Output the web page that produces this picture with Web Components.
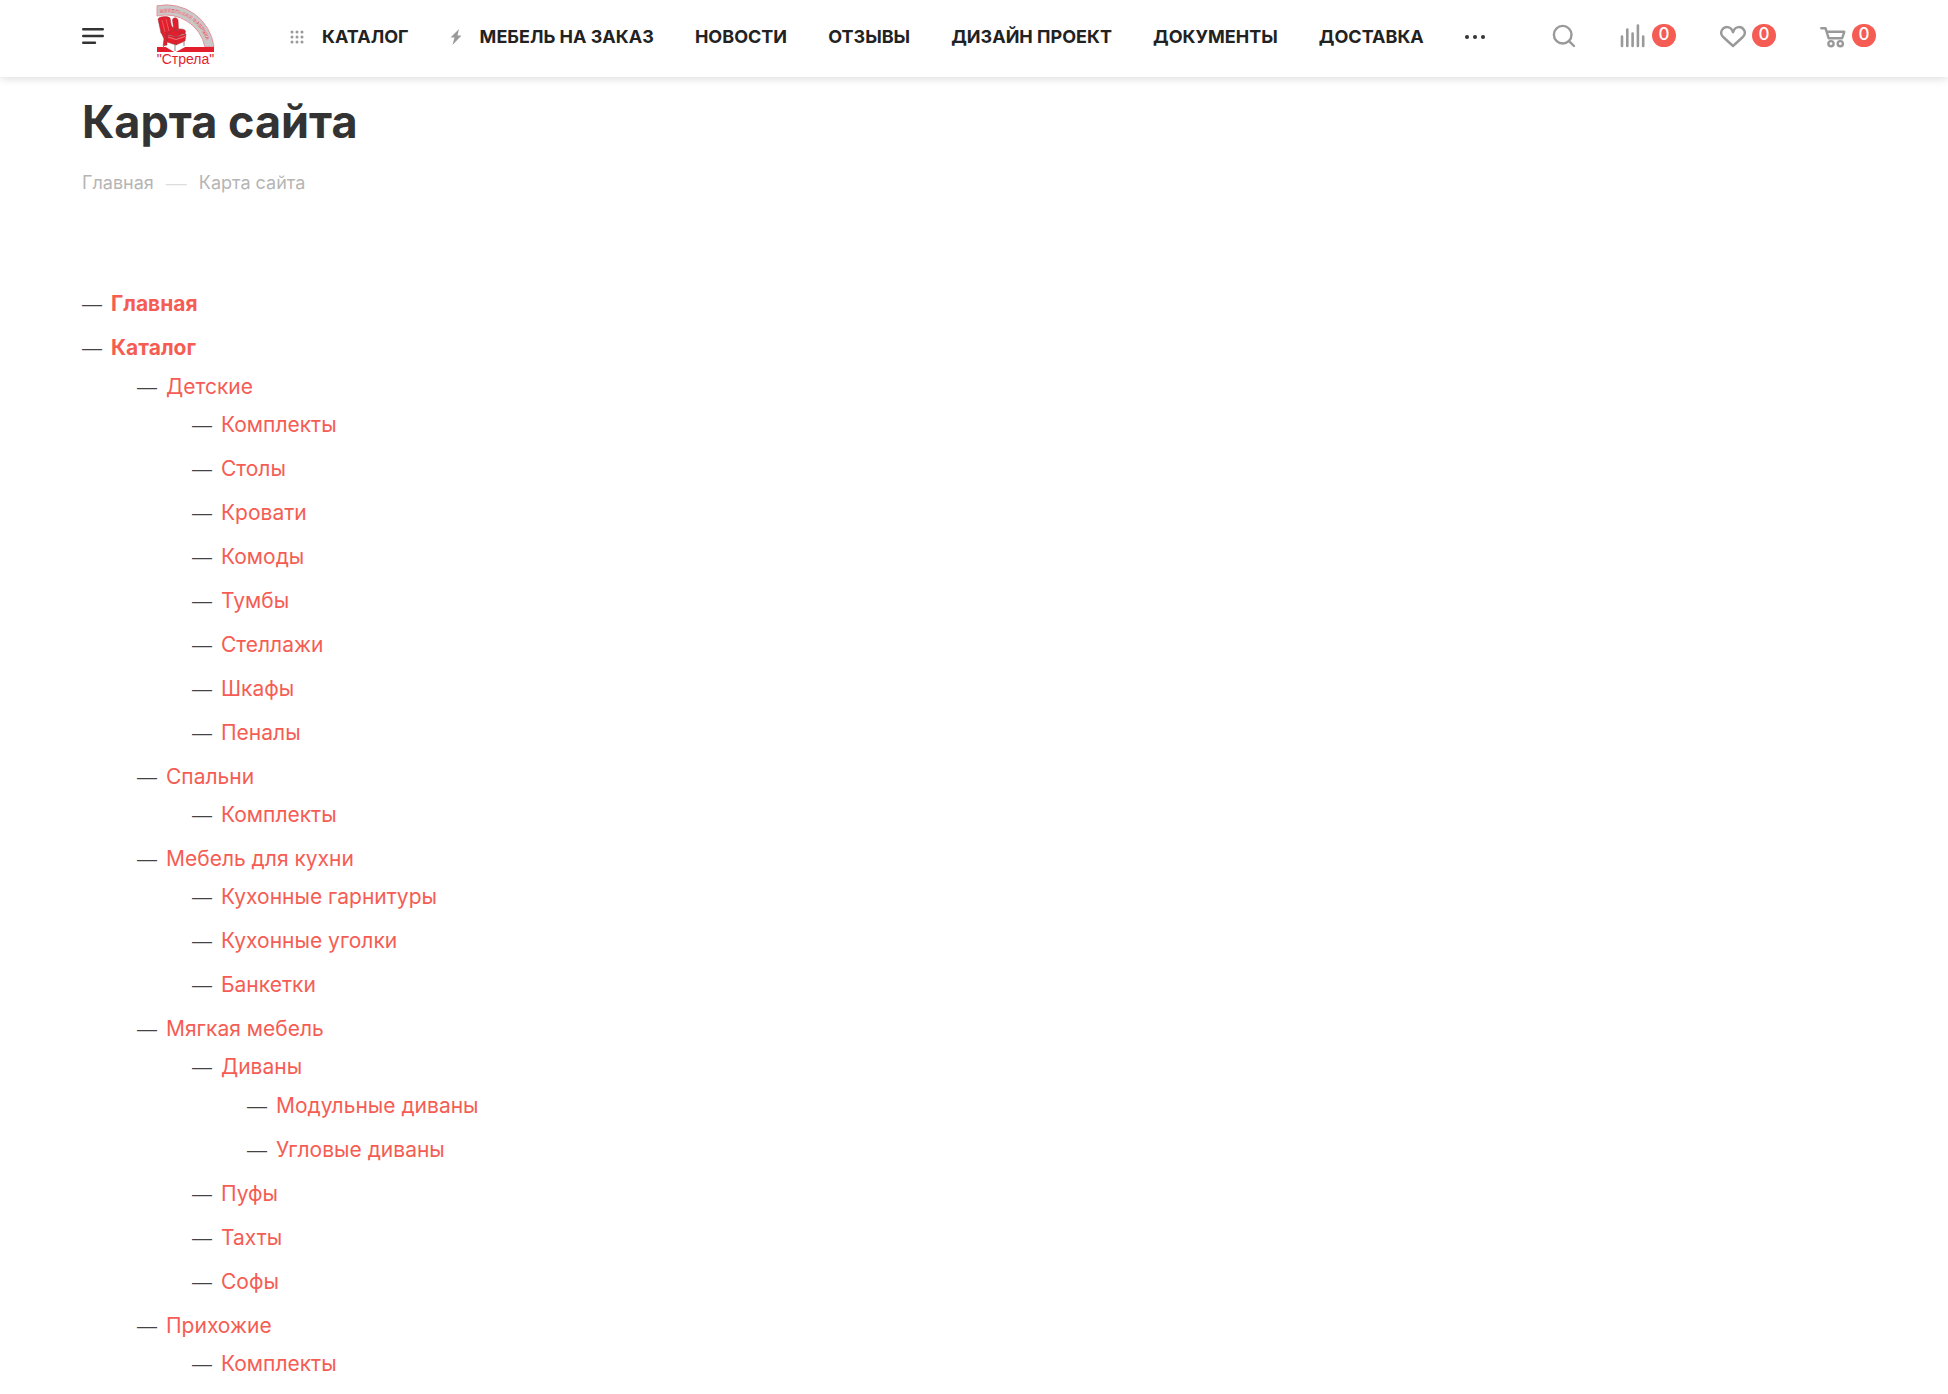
<!DOCTYPE html>
<html lang="ru">
<head>
<meta charset="utf-8">
<meta name="viewport" content="width=device-width, initial-scale=1">
<title>Карта сайта</title>
<style>
  body {
    margin: 0;
    background: #fff;
    color: #333;
    font-family: Inter, "Noto Sans", sans-serif;
    --accent: #f55d54;
    --side: 82px;
  }
</style>
</head>
<body>
<site-header>
  <nav-item href="#catalog" icon="grid">Каталог</nav-item>
  <nav-item href="#custom" icon="bolt">Мебель на заказ</nav-item>
  <nav-item href="#news">Новости</nav-item>
  <nav-item href="#reviews">Отзывы</nav-item>
  <nav-item href="#design">Дизайн проект</nav-item>
  <nav-item href="#docs">Документы</nav-item>
  <nav-item href="#delivery">Доставка</nav-item>
  <count-link slot="tools" href="#compare" icon="compare" label="Сравнение">0</count-link>
  <count-link slot="tools" href="#favorites" icon="heart" label="Избранное">0</count-link>
  <count-link slot="tools" href="#basket" icon="cart" label="Корзина">0</count-link>
</site-header>
<main>
  <page-title>
    Карта сайта
    <a slot="crumb" href="#home">Главная</a>
    <span slot="current">Карта сайта</span>
  </page-title>
  <site-map></site-map>
</main>

<script>
const ICONS = {
  grid: `<svg width="14" height="14" viewBox="0 0 14 14" fill="#999">
    <circle cx="2" cy="2" r="1.5"/><circle cx="7" cy="2" r="1.5"/><circle cx="12" cy="2" r="1.5"/>
    <circle cx="2" cy="7" r="1.5"/><circle cx="7" cy="7" r="1.5"/><circle cx="12" cy="7" r="1.5"/>
    <circle cx="2" cy="12" r="1.5"/><circle cx="7" cy="12" r="1.5"/><circle cx="12" cy="12" r="1.5"/></svg>`,
  bolt: `<svg width="12" height="16" viewBox="0 0 12 16" fill="#999">
    <path d="M9 0 .5 8.500H4.500L2.500 16 11.500 6.500H7.500Z"/></svg>`,
  compare: `<svg width="26" height="24" viewBox="0 0 26 24" stroke="#999" stroke-width="2.600" stroke-linecap="round">
    <path d="M2 12.500V22M7.300 5.500V22M12.600 9.500V22M17.900 1.500V22M23.200 12.500V22"/></svg>`,
  heart: `<svg width="26" height="24" viewBox="0 0 26 24" fill="none" stroke="#999" stroke-width="2.400" stroke-linejoin="round">
    <path d="M13 22 3.200 13C1.200 11 .8 8 2 6 4.500 2 10 2.200 12 6L13 8.300 14 6C16 2.200 21.500 2 24 6 25.200 8 24.800 11 22.800 13Z"/></svg>`,
  cart: `<svg width="26" height="24" viewBox="0 0 26 24" fill="none" stroke="#999" stroke-width="2.400" stroke-linecap="round" stroke-linejoin="round">
    <path d="M1.300 4.200H5.500L8.600 14.200H22.200L24.300 7.800H6.800"/><circle cx="11" cy="19.700" r="2.600"/><circle cx="20.300" cy="19.700" r="2.600"/></svg>`
};

class NavItem extends HTMLElement {
  constructor() {
    super();
    const shadowRoot = this.attachShadow({ mode: "open" });
    shadowRoot.innerHTML = `
      <style>
        :host { display: block; }
        a {
          display: flex;
          align-items: center;
          color: #222;
          font-size: 18px;
          line-height: 24px;
          font-weight: 700;
          text-transform: uppercase;
          text-decoration: none;
          white-space: nowrap;
        }
        svg { display: block; margin-right: 18px; }
      </style>
      <a href="${this.getAttribute("href")}">${ICONS[this.getAttribute("icon")] || ""}<slot></slot></a>
    `;
  }
}

class CountLink extends HTMLElement {
  constructor() {
    super();
    const shadowRoot = this.attachShadow({ mode: "open" });
    shadowRoot.innerHTML = `
      <style>
        :host { display: block; }
        a {
          display: flex;
          align-items: center;
          gap: 6px;
          text-decoration: none;
        }
        svg { display: block; }
        span {
          width: 24px;
          height: 23px;
          border-radius: 12px;
          background: var(--accent);
          color: #fff;
          font-size: 17px;
          line-height: 20px;
          font-weight: 500;
          text-align: center;
        }
      </style>
      <a href="${this.getAttribute("href")}" aria-label="${this.getAttribute("label")}">
        ${ICONS[this.getAttribute("icon")]}<span><slot></slot></span>
      </a>
    `;
  }
}

class SiteLogo extends HTMLElement {
  constructor() {
    super();
    const shadowRoot = this.attachShadow({ mode: "open" });
    shadowRoot.innerHTML = `
      <style>
        :host { display: block; }
        a, svg { display: block; }
        svg { overflow: visible; }
      </style>
      <a href="#home" aria-label="Стрела">
        <svg width="58" height="62" viewBox="0 0 58 62">
          <path d="M0 .8A48 48 0 0 1 57 42H48A40 40 0 0 0 0 11Z" fill="#c9c9c9" stroke="#e88088" stroke-width=".8"/>
          <path id="arc" d="M3 8A41 41 0 0 1 51 42" fill="none"/>
          <text font-family="Liberation Sans" font-size="5" font-weight="700" fill="#f6e4e5" stroke="#dd5a65" stroke-width=".3"><textPath href="#arc">МЕБЕЛЬНАЯ ФАБРИКА</textPath></text>
          <path d="M0 42H57V47H0Z" fill="#e31e2d"/>
          <path d="M7 41 18 47.500 30 41 18 36Z" fill="#fff"/>
          <g fill="#e31e2d" stroke="#8d3a40" stroke-width=".5" stroke-linejoin="round">
            <path d="M1 14C3 11 11 11 13 13L15.500 27 9 31 4 28Z"/>
            <path d="M15.500 15C16 12 20 12 21 15L21.500 24 17 26Z"/>
            <path d="M13 20 18 24 19 28 12 30Z"/>
            <path d="M4 27C6 24 10 26 10 30L10 40 6 41 7 34Z"/>
            <path d="M10 29 17 25 28 28 19 32Z"/>
            <path d="M10 30 19 32 19 40 10 37Z"/>
            <path d="M19 32 29 29 28 36 19 40Z"/>
            <path d="M19 25C22 23 28 24 28.500 26L28 29 21 28Z"/>
          </g>
          <path d="M6.500 40V42.500M18 39V46M27 37V41" stroke="#888" stroke-width="1"/>
          <path d="M11 32 19 34.500 28 31.500" fill="none" stroke="#f9b9bc" stroke-width=".6"/>
          <path d="M5 15 8 27M9 14 12 26" stroke="#f47b80" stroke-width=".6"/>
          <text x="28.500" y="59" text-anchor="middle" font-family="Liberation Sans" font-size="14" fill="#e31e2d">"Стрела"</text>
        </svg>
      </a>
    `;
  }
}

class SiteHeader extends HTMLElement {
  constructor() {
    super();
    const shadowRoot = this.attachShadow({ mode: "open" });
    shadowRoot.innerHTML = `
      <style>
        :host { display: block; }
        header {
          display: flex;
          align-items: center;
          box-sizing: border-box;
          height: 77px;
          padding: 0 72px 6px var(--side);
          background: #fff;
          box-shadow: 0 2px 8px rgba(0, 0, 0, .13);
        }
        button {
          display: block;
          padding: 0;
          border: 0;
          background: none;
        }
        svg { display: block; }
        site-logo { margin: 0 75px 0 53px; }
        nav {
          flex: 1;
          display: flex;
          align-items: center;
          justify-content: space-between;
          padding-top: 2px;
        }
        .tools {
          display: flex;
          align-items: center;
          gap: 44px;
          margin-left: 67px;
        }
      </style>
      <header>
        <button aria-label="Меню">
          <svg width="22" height="16" viewBox="0 0 22 16" stroke="#333" stroke-width="2.400" stroke-linecap="round">
            <path d="M1.200 1.200H20.800M1.200 8H20.800M1.200 14.800H13"/>
          </svg>
        </button>
        <site-logo></site-logo>
        <nav>
          <slot></slot>
          <button aria-label="Ещё">
            <svg width="20" height="4" viewBox="0 0 20 4" fill="#333"><circle cx="2" cy="2" r="2"/><circle cx="10" cy="2" r="2"/><circle cx="18" cy="2" r="2"/></svg>
          </button>
        </nav>
        <div class="tools">
          <button aria-label="Поиск">
            <svg width="24" height="24" viewBox="0 0 24 24" fill="none" stroke="#999" stroke-width="2.400" stroke-linecap="round">
              <circle cx="10.700" cy="10.700" r="8.800"/><path d="M17.300 17.300 22 22"/>
            </svg>
          </button>
          <slot name="tools"></slot>
        </div>
      </header>
    `;
  }
}

class PageTitle extends HTMLElement {
  constructor() {
    super();
    const shadowRoot = this.attachShadow({ mode: "open" });
    shadowRoot.innerHTML = `
      <style>
        :host { display: block; padding: 18px var(--side) 0; }
        h1 {
          margin: 0;
          font-size: 45px;
          line-height: 54px;
          font-weight: 700;
        }
        nav {
          display: flex;
          gap: 12px;
          margin-top: 22px;
          color: #b6b5b5;
          font-size: 18px;
          line-height: 24px;
        }
        .dash { color: #ddd; font-family: "Liberation Sans", sans-serif; font-size: 21px; }
        ::slotted(a) { color: inherit; text-decoration: none; }
      </style>
      <h1><slot></slot></h1>
      <nav><slot name="crumb"></slot><span class="dash">—</span><slot name="current"></slot></nav>
    `;
  }
}

const SECTIONS = [
  ["Главная"],
  ["Каталог", [
    ["Детские", [["Комплекты"], ["Столы"], ["Кровати"], ["Комоды"], ["Тумбы"], ["Стеллажи"], ["Шкафы"], ["Пеналы"]]],
    ["Спальни", [["Комплекты"]]],
    ["Мебель для кухни", [["Кухонные гарнитуры"], ["Кухонные уголки"], ["Банкетки"]]],
    ["Мягкая мебель", [
      ["Диваны", [["Модульные диваны"], ["Угловые диваны"]]],
      ["Пуфы"], ["Тахты"], ["Софы"]
    ]],
    ["Прихожие", [["Комплекты"]]]
  ]]
];

class SiteMap extends HTMLElement {
  constructor() {
    super();
    const shadowRoot = this.attachShadow({ mode: "open" });
    shadowRoot.innerHTML = `
      <style>
        :host { display: block; padding: 94px var(--side) 0; }
        ul { margin: 0; padding: 0; list-style: none; }
        li { margin-bottom: 14px; }
        li:last-child { margin-bottom: 0; }
        ul ul { margin-top: 9px; padding-left: 55px; }
        ul ul ul { margin-top: 8px; }
        ul ul ul ul { margin-top: 9px; }
        div { display: flex; gap: 9px; font-size: 21px; line-height: 30px; }
        .dash { color: #444; font-family: "Liberation Sans", sans-serif; font-size: 20px; }
        a { color: var(--accent); text-decoration: none; }
        .root > li > div > a { font-weight: 700; }
      </style>
      <ul class="root">${this.#renderItems(SECTIONS)}</ul>
    `;
  }

  #renderItems(items) {
    return items.map(([name, children]) => `
      <li>
        <div><span class="dash">—</span><a href="#">${name}</a></div>
        ${children ? `<ul>${this.#renderItems(children)}</ul>` : ""}
      </li>`).join("");
  }
}

customElements.define("nav-item", NavItem);
customElements.define("count-link", CountLink);
customElements.define("site-logo", SiteLogo);
customElements.define("site-header", SiteHeader);
customElements.define("page-title", PageTitle);
customElements.define("site-map", SiteMap);
</script>
</body>
</html>
